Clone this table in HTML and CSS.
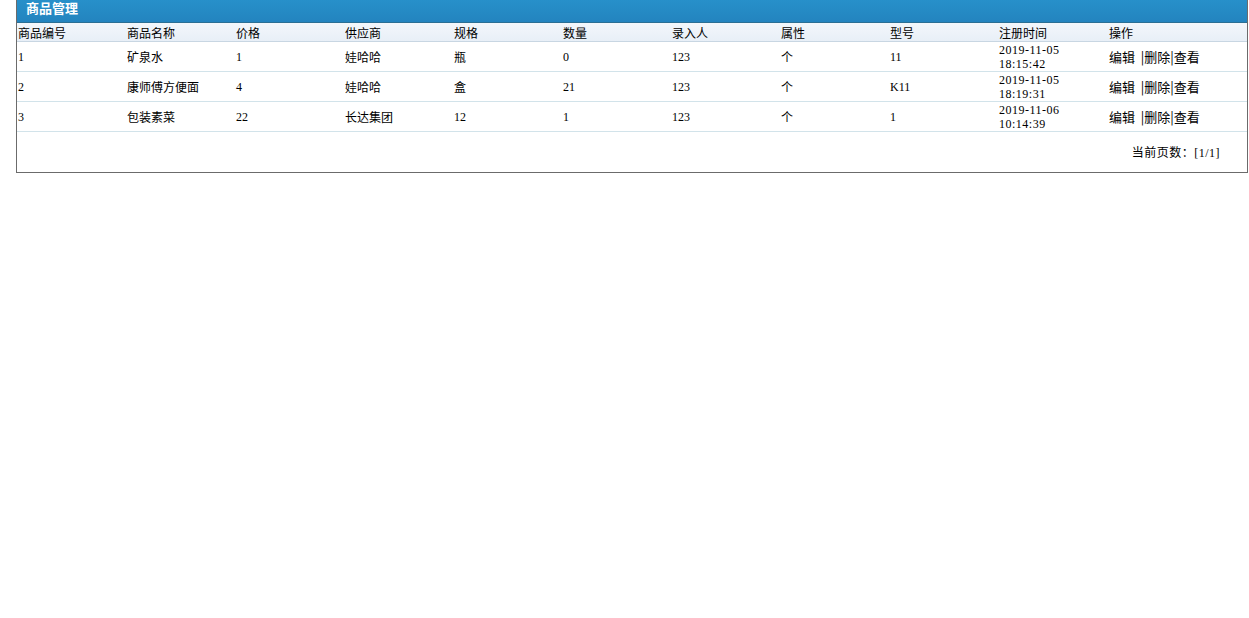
FILE: index.html
```html
<!DOCTYPE html>
<html lang="zh-CN">
<head>
<meta charset="utf-8">
<title>商品管理</title>
<link rel="stylesheet" href="styles.css">
</head>
<body>
<div class="panel">
  <div class="panel-title">商品管理</div>
  <div class="grid">
    <div class="row head">
      <div class="cell">商品编号</div><div class="cell">商品名称</div><div class="cell">价格</div><div class="cell">供应商</div><div class="cell">规格</div><div class="cell">数量</div><div class="cell">录入人</div><div class="cell">属性</div><div class="cell">型号</div><div class="cell">注册时间</div><div class="cell">操作</div>
    </div>
    <div class="row">
      <div class="cell">1</div><div class="cell">矿泉水</div><div class="cell">1</div><div class="cell">娃哈哈</div><div class="cell">瓶</div><div class="cell">0</div><div class="cell">123</div><div class="cell">个</div><div class="cell">11</div><div class="cell date">2019-11-05<br>18:15:42</div><div class="cell ops">编辑&nbsp;&nbsp;|删除|查看</div>
    </div>
    <div class="row">
      <div class="cell">2</div><div class="cell">康师傅方便面</div><div class="cell">4</div><div class="cell">娃哈哈</div><div class="cell">盒</div><div class="cell">21</div><div class="cell">123</div><div class="cell">个</div><div class="cell">K11</div><div class="cell date">2019-11-05<br>18:19:31</div><div class="cell ops">编辑&nbsp;&nbsp;|删除|查看</div>
    </div>
    <div class="row">
      <div class="cell">3</div><div class="cell">包装素菜</div><div class="cell">22</div><div class="cell">长达集团</div><div class="cell">12</div><div class="cell">1</div><div class="cell">123</div><div class="cell">个</div><div class="cell">1</div><div class="cell date">2019-11-06<br>10:14:39</div><div class="cell ops">编辑&nbsp;&nbsp;|删除|查看</div>
    </div>
  </div>
  <div class="pager">当前页数：[1/1]</div>
</div>
</body>
</html>
```
FILE: styles.css
```css
html, body {
  margin: 0;
  padding: 0;
  background: #fff;
}
body {
  font-family: "Liberation Serif", "Noto Sans CJK SC", serif;
  font-size: 12px;
  color: #000;
}
.panel {
  margin-left: 16px;
  width: 1230px;
  border: 1px solid #6b6b6b;
  border-top: none;
}
.panel-title {
  height: 22px;
  line-height: 16px;
  padding-left: 9px;
  font-family: "Noto Sans CJK SC", sans-serif;
  font-size: 13px;
  font-weight: bold;
  color: #fff;
  background: linear-gradient(#2790ca, #2384bf);
  border-bottom: 1px solid #2b6f93;
}
.grid {
  display: flex;
  flex-direction: column;
}
.row {
  display: grid;
  grid-template-columns: repeat(9, 109px) 110px 1fr;
  height: 29px;
  border-bottom: 1px solid #d2e3ea;
  align-items: center;
}
.row.head {
  height: 18px;
  background: linear-gradient(#f3f7fb, #e8eff7);
  border-bottom: 1px solid #c8d6e2;
  font-family: "Noto Sans CJK SC", sans-serif;
}
.cell {
  padding-left: 1px;
  padding-top: 1px;
  white-space: nowrap;
}
.row.head .cell {
  line-height: 17px;
  padding-top: 1px;
}
.date {
  line-height: 14px;
  letter-spacing: 0.5px;
  padding-top: 0;
}
.ops {
  font-family: "Noto Sans CJK SC", sans-serif;
  font-size: 13px;
  color: #000;
  padding-top: 0;
}
.pager {
  height: 40px;
  display: flex;
  align-items: center;
  justify-content: flex-end;
  padding-right: 27px;
  letter-spacing: 0.5px;
}
```
